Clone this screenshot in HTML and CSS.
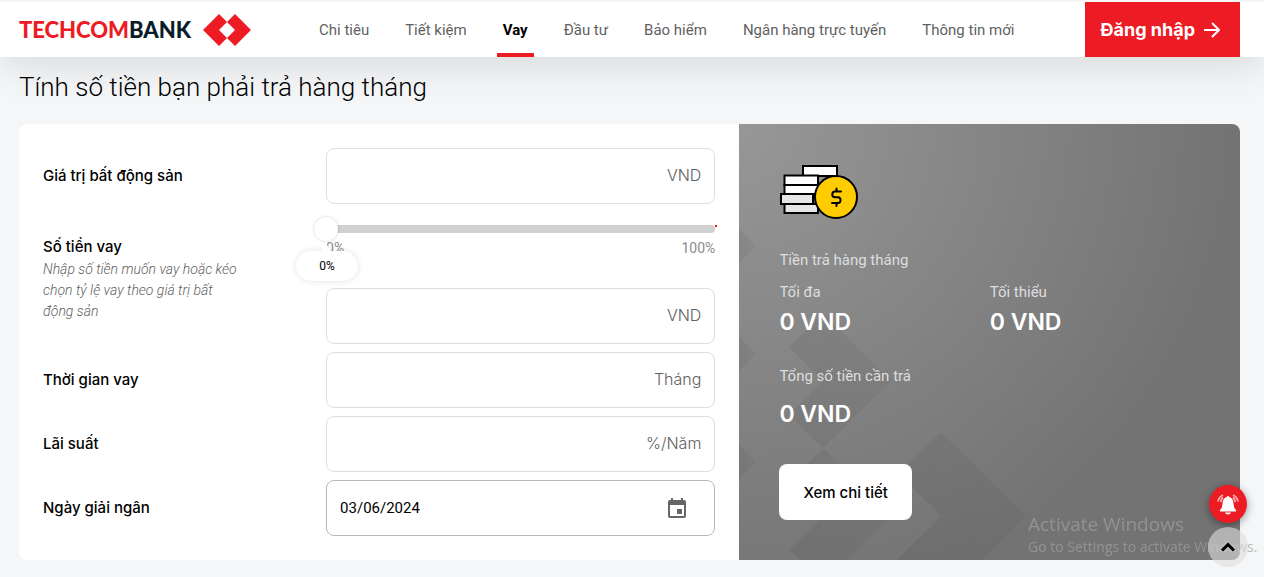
FILE: index.html
```html
<!DOCTYPE html>
<html lang="vi">
<head>
<meta charset="utf-8">
<meta name="viewport" content="width=device-width, initial-scale=1">
<title>Techcombank - Vay</title>
<link rel="stylesheet" href="styles.css">
</head>
<body>
<header class="header">
  <a class="logo" href="#" aria-label="Techcombank">
    <span class="logo-text"><span class="logo-red">TECHCOM</span>BANK</span>
    <svg class="logo-mark" viewBox="0 0 48 32" aria-hidden="true">
      <path fill="#ed1c24" d="M0 16 16 0 24 8 16 16 24 24 16 32Z"/>
      <path fill="#ed1c24" d="M48 16 32 0 24 8 32 16 24 24 32 32Z"/>
    </svg>
  </a>
  <nav class="nav">
    <a class="nav-link" href="#">Chi tiêu</a>
    <a class="nav-link" href="#">Tiết kiệm</a>
    <a class="nav-link active" href="#" aria-current="page">Vay</a>
    <a class="nav-link" href="#">Đầu tư</a>
    <a class="nav-link" href="#">Bảo hiểm</a>
    <a class="nav-link" href="#">Ngân hàng trực tuyến</a>
    <a class="nav-link" href="#">Thông tin mới</a>
  </nav>
  <a class="login" href="#">Đăng nhập
    <svg class="login-arrow" viewBox="0 0 16 16" aria-hidden="true"><path d="M0 8H15M8 1 15 8 8 15" fill="none" stroke="#fff" stroke-width="2"/></svg>
  </a>
</header>

<main class="main">
  <h1 class="title">Tính số tiền bạn phải trả hàng tháng</h1>
  <div class="card">
    <form class="form">
      <div class="row">
        <label class="label" for="value">Giá trị bất động sản</label>
        <div class="field"><input class="input" id="value" type="text"><span class="unit">VND</span></div>
      </div>
      <div class="row row-loan">
        <div class="loan-text">
          <label class="label" for="loan">Số tiền vay</label>
          <p class="hint">Nhập số tiền muốn vay hoặc kéo chọn tỷ lệ vay theo giá trị bất động sản</p>
        </div>
        <div class="loan-fields">
          <div class="slider">
            <div class="track">
              <input class="range" type="range" min="0" max="100" value="0" aria-label="Tỷ lệ vay">
              <span class="track-end"></span>
            </div>
            <div class="scale"><span>0%</span><span>100%</span></div>
            <output class="bubble">0%</output>
          </div>
          <div class="field"><input class="input" id="loan" type="text"><span class="unit">VND</span></div>
        </div>
      </div>
      <div class="row">
        <label class="label" for="term">Thời gian vay</label>
        <div class="field"><input class="input" id="term" type="text"><span class="unit">Tháng</span></div>
      </div>
      <div class="row">
        <label class="label" for="rate">Lãi suất</label>
        <div class="field"><input class="input" id="rate" type="text"><span class="unit">%/Năm</span></div>
      </div>
      <div class="row">
        <label class="label" for="date">Ngày giải ngân</label>
        <div class="field field-date">
          <input class="input" id="date" type="text" value="03/06/2024">
          <button class="calendar" type="button" aria-label="Chọn ngày">
            <svg viewBox="0 0 18 20" width="18" height="20" aria-hidden="true"><path fill="#666" fill-rule="evenodd" d="M3 0H5V2H13V0H15V2H16Q18 2 18 4V18Q18 20 16 20H2Q0 20 0 18V4Q0 2 2 2H3ZM2 7V18H16V7ZM9 11H14V16H9Z"/></svg>
          </button>
        </div>
      </div>
    </form>

    <section class="result">
      <svg class="pattern" viewBox="0 0 501 436" preserveAspectRatio="xMinYMax slice" aria-hidden="true">
        <defs>
          <linearGradient id="shade" x1="0" y1="0" x2="1" y2="0">
            <stop offset="0" stop-opacity=".06"/><stop offset="1" stop-opacity=".04"/>
          </linearGradient>
        </defs>
        <g fill="url(#shade)">
          <path d="M0 105 17 122 0 139Z"/><path d="M0 213 17 230 0 247Z"/><path d="M0 321 17 338 0 355Z"/>
          <path d="M50 223 84 189 152 257 84 324 50 291 84 257Z"/>
          <path d="M50 358 84 324 152 392 108 436H62L50 426 84 392Z"/>
          <path d="M168 342 202 308 287 392 243 436H158L202 392 168 358Z"/>
        </g>
      </svg>
      <div class="result-body">
        <svg class="money" viewBox="0 0 80 56" aria-hidden="true">
          <g stroke="#000" stroke-width="2">
            <path fill="#fff" d="M24 2H58V12H24Z"/>
            <path fill="#fff" d="M5.500 11.500H39V21H5.500Z"/>
            <path fill="#fff" d="M5.500 21H39V30H5.500Z"/>
            <path fill="#e6e6e6" d="M5.500 40H39V49H5.500Z"/>
            <path fill="#e6e6e6" d="M2 30H34V40H2Z"/>
            <circle cx="57" cy="33" r="21" fill="#fc0"/>
            <path fill="none" stroke-linecap="round" d="M62 27.500H55.500A3 3 0 0 0 55.500 33.300H59.500A3 3 0 0 1 59.500 39H53M57.500 24.500V27M57.500 39V42"/>
          </g>
        </svg>
        <h2 class="result-label">Tiền trả hàng tháng</h2>
        <dl class="range-values">
          <div><dt class="result-label">Tối đa</dt><dd class="amount">0 VND</dd></div>
          <div><dt class="result-label">Tối thiểu</dt><dd class="amount">0 VND</dd></div>
        </dl>
        <dl class="total">
          <dt class="result-label">Tổng số tiền cần trả</dt><dd class="amount">0 VND</dd>
        </dl>
        <button class="detail" type="button">Xem chi tiết</button>
      </div>
    </section>
  </div>
</main>

<aside class="watermark">
  <p class="watermark-title">Activate Windows</p>
  <p class="watermark-text">Go to Settings to activate Windows.</p>
</aside>
<div class="floating">
  <button class="bell" type="button" aria-label="Thông báo">
    <svg viewBox="0 0 24 24" width="24" height="24" aria-hidden="true">
      <path fill="#fff" d="M12 4Q13 4 13.200 5Q17 6 17.500 11Q17.500 16 20 18V19.500H4V18Q6.500 16 6.500 11Q7 6 10.800 5Q11 4 12 4ZM9 20.500H15Q14.500 22.500 12 22.500Q9.500 22.500 9 20.500Z"/>
      <path fill="none" stroke="#fff" stroke-opacity=".65" stroke-width="1.800" d="M2 9.500Q2.500 5.500 7 3M4.800 10Q4.800 7.500 7 5.500M22 9.500Q21.500 5.500 17 3M19.200 10Q19.200 7.500 17 5.500"/>
    </svg>
  </button>
  <button class="to-top" type="button" aria-label="Lên đầu trang">
    <svg viewBox="0 0 16 10" width="16" height="10" aria-hidden="true"><path d="M2 8.500 8 2.500 14 8.500" fill="none" stroke="#000" stroke-width="3"/></svg>
  </button>
</div>
</body>
</html>
```
FILE: styles.css
```css
* { box-sizing: border-box; }
body {
  margin: 0;
  min-height: 100vh;
  background: #f5f6f8;
  color: #000;
  font-family: Roboto, Inter, sans-serif;
  font-size: 15px;
  overflow: hidden;
}
button, input { font: inherit; color: inherit; }
h1, h2, p, dl, dd { margin: 0; }
a { color: inherit; text-decoration: none; }

.header {
  position: relative;
  display: flex;
  align-items: stretch;
  height: 57px;
  padding: 0 24px 0 19px;
  background: #fff;
  border-top: 2px solid #f5f5f5;
  box-shadow: 0 8px 40px rgba(0, 0, 0, .12);
}
.logo { display: flex; align-items: center; gap: 12px; width: 294px; }
.logo-text {
  color: #0a1d29;
  font-family: Lato, sans-serif;
  font-size: 22px;
  font-weight: 900;
}
.logo-red { color: #ed1c24; }
.logo-mark { width: 48px; height: 32px; }
.nav { display: flex; gap: 24px; flex: 1; white-space: nowrap; }
.nav-link {
  display: flex;
  align-items: center;
  padding: 4px 6px 0;
  border-bottom: 4px solid transparent;
  color: #616161;
}
.nav-link.active { color: #000; font-weight: 700; border-color: #ed1c24; }
.login {
  display: flex;
  align-items: center;
  gap: 9px;
  padding: 0 20px 0 16px;
  background: #ed1c24;
  color: #fff;
  font-family: Inter, sans-serif;
  font-size: 18px;
  font-weight: 700;
  white-space: nowrap;
}
.login-arrow { width: 16px; height: 16px; }

.main { padding: 12px 24px 17px 19px; }
.title { position: relative; font-size: 26px; line-height: 36px; font-weight: 300; margin-bottom: 19px; }
.card {
  position: relative;
  display: grid;
  grid-template-columns: 59fr 41fr;
  background: #fff;
  border-radius: 8px;
  overflow: hidden;
}
.form { display: flex; flex-direction: column; gap: 8px; padding: 24px; }
.row { display: grid; grid-template-columns: 8fr 11fr; align-items: center; }
.label { font-family: Inter, sans-serif; font-weight: 500; line-height: 24px; }
.field {
  display: flex;
  align-items: center;
  height: 56px;
  padding: 0 13px;
  border: 1px solid #dedede;
  border-radius: 8px;
  background: #fff;
}
.field-date { border-color: #b8b8b8; padding-right: 28px; }
.input { flex: 1; min-width: 0; padding: 0; border: 0; outline: 0; background: none; }
.unit { color: #616161; font-family: Inter, sans-serif; font-size: 16px; font-weight: 300; line-height: 20px; padding-bottom: 2px; }
.calendar { display: flex; padding: 0; border: 0; background: none; }
.row-loan { align-items: start; }
.loan-text { padding-top: 23px; }
.hint {
  max-width: 200px;
  color: #616161;
  font-size: 14px;
  font-style: italic;
  font-weight: 300;
  line-height: 21px;
}
.slider { position: relative; height: 76px; padding-top: 13px; }
.track { position: relative; height: 8px; border-radius: 0 4px 4px 0; background: #d1d1d1; }
.track-end { position: absolute; top: 0; right: -2px; width: 2px; height: 2px; background: #ed1c24; }
.range {
  position: absolute;
  z-index: 1;
  top: -8px;
  left: -12px;
  width: calc(100% + 24px);
  height: 24px;
  margin: 0;
  appearance: none;
  background: none;
}
.range::-webkit-slider-thumb {
  appearance: none;
  width: 24px;
  height: 24px;
  border-radius: 50%;
  background: #fff;
  box-shadow: 0 0 3px rgba(0, 0, 0, .2);
}
.scale {
  display: flex;
  justify-content: space-between;
  margin-top: 7px;
  color: #8c8c8c;
  font-size: 14px;
  line-height: 16px;
}
.bubble {
  position: absolute;
  top: 39px;
  left: -30px;
  width: 62px;
  border-radius: 16px;
  background: #fff;
  box-shadow: 0 0 6px rgba(0, 0, 0, .12);
  font-size: 12px;
  line-height: 30px;
  text-align: center;
}
.bubble::before {
  content: "";
  position: absolute;
  top: -8px;
  left: 25px;
  border: solid transparent;
  border-width: 0 5px 9px;
  border-bottom-color: #fff;
}

.result {
  position: relative;
  background: radial-gradient(circle farthest-corner at 0 0, #979797 0, #737373 75%);
  color: #fff;
}
.pattern { position: absolute; inset: 0; width: 100%; height: 100%; }
.result-body { position: relative; padding: 40px; }
.money { display: block; width: 80px; height: 56px; margin-bottom: 28px; }
.result-label { color: #dedede; font-size: 15px; font-weight: 400; line-height: 24px; }
.range-values { display: grid; grid-template-columns: 1fr 1fr; margin-top: 8px; }
.amount { font-family: Inter, sans-serif; font-size: 23px; font-weight: 600; line-height: 36px; }
.total { margin-top: 24px; }
.total .amount { margin-top: 8px; }
.detail {
  height: 56px;
  margin-top: 32px;
  padding: 0 24px;
  border: 0;
  border-radius: 8px;
  background: #fff;
  color: #000;
  font-family: Inter, sans-serif;
  font-weight: 500;
}

.watermark {
  position: fixed;
  left: calc(100% - 236px);
  bottom: 20px;
  color: rgba(160, 160, 160, .7);
  font-family: "Open Sans", sans-serif;
  white-space: nowrap;
  pointer-events: none;
}
.watermark-title { font-size: 19px; line-height: 26px; }
.watermark-text { font-size: 14px; line-height: 20px; }
.floating {
  position: fixed;
  right: 16px;
  bottom: 10px;
  display: flex;
  flex-direction: column;
  align-items: center;
  gap: 4px;
}
.bell, .to-top {
  display: flex;
  align-items: center;
  justify-content: center;
  padding: 0;
  border: 0;
  border-radius: 50%;
}
.bell { width: 38px; height: 38px; background: #ed1c24; box-shadow: 0 2px 8px rgba(0, 0, 0, .4); }
.to-top { width: 40px; height: 40px; background: rgba(222, 222, 222, .6); }
```
